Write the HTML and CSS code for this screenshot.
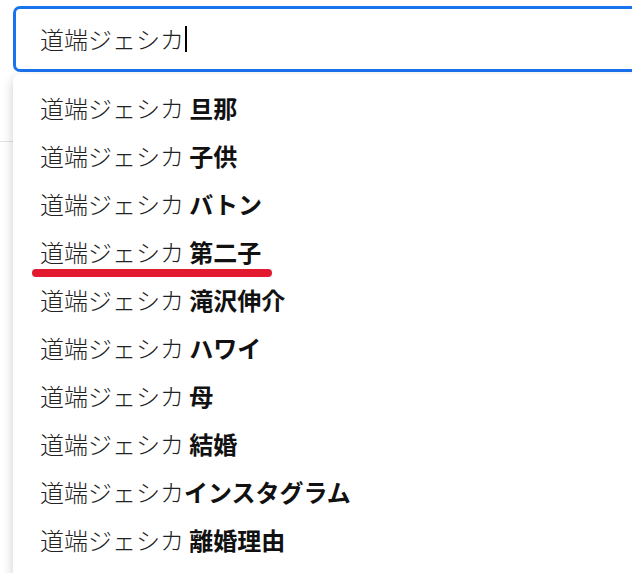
FILE: index.html
```html
<!DOCTYPE html>
<html lang="ja">
<head>
    <meta charset="UTF-8">
    <meta name="viewport" content="width=device-width, initial-scale=1.0">
    <title>検索</title>
    <link rel="stylesheet" href="styles.css">
</head>
<body>

    <div class="page">
        <div class="page-header"></div>

        <div class="search">
            <div class="search-box">
                <span class="query">道端ジェシカ</span><span class="caret"></span>
            </div>

            <ul class="suggestions">
                <li class="suggestion">道端ジェシカ <b>旦那</b></li>
                <li class="suggestion">道端ジェシカ <b>子供</b></li>
                <li class="suggestion">道端ジェシカ <b>バトン</b></li>
                <li class="suggestion marked">道端ジェシカ <b>第二子</b><span class="underline"></span></li>
                <li class="suggestion">道端ジェシカ <b>滝沢伸介</b></li>
                <li class="suggestion">道端ジェシカ <b>ハワイ</b></li>
                <li class="suggestion">道端ジェシカ <b>母</b></li>
                <li class="suggestion">道端ジェシカ <b>結婚</b></li>
                <li class="suggestion">道端ジェシカ<b>インスタグラム</b></li>
                <li class="suggestion">道端ジェシカ <b>離婚理由</b></li>
            </ul>
        </div>
    </div>

</body>
</html>
```

FILE: styles.css
```css
:root {
    --blue: #1a73ee;
    --text: #222222;
    --text-strong: #111111;
    --marker: #e2192f;
    --border: #e3e3e3;
    --white: #ffffff;
}

* {
    margin: 0;
    padding: 0;
    box-sizing: border-box;
    font-family: 'Noto Sans CJK JP', 'Noto Sans', sans-serif;
}

body {
    background-color: var(--white);
    color: var(--text);
    overflow: hidden;
}

.page {
    position: relative;
    width: 632px;
    height: 573px;
    overflow: hidden;
}

.page-header {
    height: 142px;
    border-bottom: 1px solid var(--border);
}

/* the box runs on past the right edge of the shot */
.search {
    position: absolute;
    top: 6px;
    left: 13px;
    right: -40px;
}

.search-box {
    display: flex;
    align-items: center;
    height: 66px;
    padding-left: 24px;
    border: 3px solid var(--blue);
    border-radius: 7px;
    background: var(--white);
    font-size: 24px;
    font-weight: 300;
    line-height: 1;
}

.caret {
    width: 2px;
    height: 26px;
    margin-left: 1px;
    background: #000;
}

.suggestions {
    list-style: none;
    margin-top: 2px;
    padding: 10px 0 16px;
    background: var(--white);
    border-radius: 7px;
    box-shadow: 0 4px 12px rgba(0, 0, 0, 0.2);
}

.suggestion {
    position: relative;
    height: 48px;
    padding-left: 27px;
    font-size: 24px;
    font-weight: 300;
    line-height: 48px;
    white-space: nowrap;
}

.suggestion b {
    font-weight: 700;
    color: var(--text-strong);
}

.underline {
    position: absolute;
    left: 19px;
    top: 41px;
    width: 240px;
    height: 8px;
    border-radius: 4px;
    background: var(--marker);
}
```
